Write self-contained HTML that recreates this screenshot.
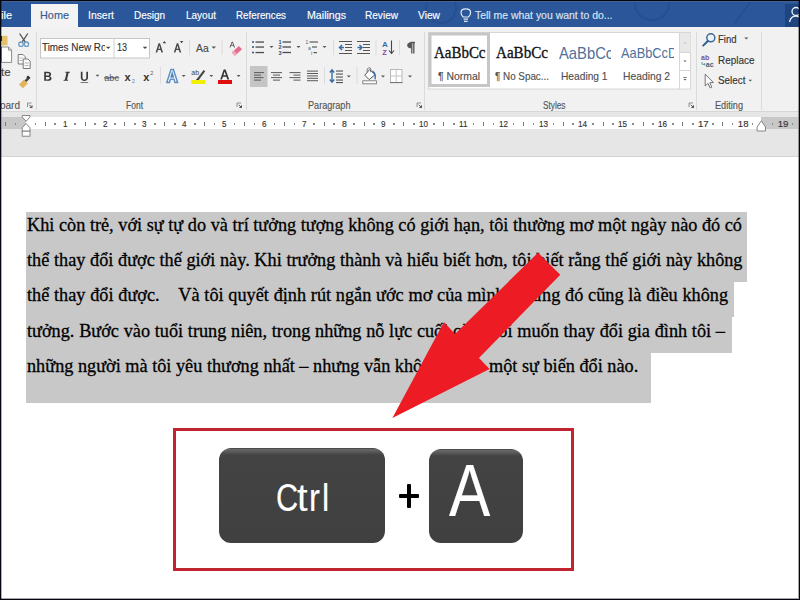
<!DOCTYPE html>
<html><head><meta charset="utf-8"><style>
*{margin:0;padding:0;box-sizing:border-box}
html,body{width:800px;height:600px;overflow:hidden;background:#fff}
body{position:relative;font-family:"Liberation Sans",sans-serif}
.a{position:absolute}
.t{position:absolute;white-space:pre;transform-origin:0 0;-webkit-text-stroke:0.15px currentColor}
.rt{position:absolute;background:#777}
.sep{position:absolute;width:1px;background:#dadada}
.sel{position:absolute;background:#c8c8c8}
</style></head>
<body>
<!-- tab bar -->
<div class="a" style="left:0;top:0;width:800px;height:27px;background:#2b579a"></div>
<div class="a" style="left:784.5px;top:4px;width:15.5px;height:22.5px;background:#1f4581"></div>
<div class="a" style="left:31px;top:4px;width:47px;height:24px;background:#f3f3f3"></div>
<!-- ribbon -->
<div class="a" style="left:0;top:27px;width:800px;height:85px;background:#f1f1f1"></div>
<div class="a" style="left:0;top:111px;width:800px;height:1px;background:#d6d6d6"></div>
<!-- group separators -->
<div class="sep" style="left:36px;top:32px;height:78px"></div>
<div class="sep" style="left:246px;top:32px;height:78px"></div>
<div class="sep" style="left:424px;top:32px;height:78px"></div>
<div class="sep" style="left:696px;top:32px;height:78px"></div>
<div class="sep" style="left:761px;top:32px;height:78px"></div>
<!-- ruler area -->
<div class="a" style="left:0;top:112px;width:800px;height:44px;background:#e6e6e6"></div>
<div class="a" style="left:2px;top:117px;width:796px;height:12px;background:#ffffff"></div>
<div class="a" style="left:2px;top:117px;width:24px;height:12px;background:#c8c8c8"></div>
<div class="a" style="left:761px;top:117px;width:37px;height:12px;background:#c8c8c8"></div>
<div class="rt" style="left:4.93px;top:122px;width:1px;height:4.3px"></div>
<div class="rt" style="left:14.59px;top:123px;width:1.6px;height:1.6px;background:#8a8a8a"></div>
<div class="rt" style="left:34.51px;top:123px;width:1.6px;height:1.6px;background:#8a8a8a"></div>
<div class="rt" style="left:44.77px;top:122px;width:1px;height:4.3px"></div>
<div class="rt" style="left:54.44px;top:123px;width:1.6px;height:1.6px;background:#8a8a8a"></div>
<div class="rt" style="left:74.36px;top:123px;width:1.6px;height:1.6px;background:#8a8a8a"></div>
<div class="rt" style="left:84.62px;top:122px;width:1px;height:4.3px"></div>
<div class="rt" style="left:94.29px;top:123px;width:1.6px;height:1.6px;background:#8a8a8a"></div>
<div class="rt" style="left:114.21px;top:123px;width:1.6px;height:1.6px;background:#8a8a8a"></div>
<div class="rt" style="left:124.47px;top:122px;width:1px;height:4.3px"></div>
<div class="rt" style="left:134.14px;top:123px;width:1.6px;height:1.6px;background:#8a8a8a"></div>
<div class="rt" style="left:154.06px;top:123px;width:1.6px;height:1.6px;background:#8a8a8a"></div>
<div class="rt" style="left:164.33px;top:122px;width:1px;height:4.3px"></div>
<div class="rt" style="left:173.99px;top:123px;width:1.6px;height:1.6px;background:#8a8a8a"></div>
<div class="rt" style="left:193.91px;top:123px;width:1.6px;height:1.6px;background:#8a8a8a"></div>
<div class="rt" style="left:204.18px;top:122px;width:1px;height:4.3px"></div>
<div class="rt" style="left:213.84px;top:123px;width:1.6px;height:1.6px;background:#8a8a8a"></div>
<div class="rt" style="left:233.76px;top:123px;width:1.6px;height:1.6px;background:#8a8a8a"></div>
<div class="rt" style="left:244.03px;top:122px;width:1px;height:4.3px"></div>
<div class="rt" style="left:253.69px;top:123px;width:1.6px;height:1.6px;background:#8a8a8a"></div>
<div class="rt" style="left:273.61px;top:123px;width:1.6px;height:1.6px;background:#8a8a8a"></div>
<div class="rt" style="left:283.88px;top:122px;width:1px;height:4.3px"></div>
<div class="rt" style="left:293.54px;top:123px;width:1.6px;height:1.6px;background:#8a8a8a"></div>
<div class="rt" style="left:313.46px;top:123px;width:1.6px;height:1.6px;background:#8a8a8a"></div>
<div class="rt" style="left:323.72px;top:122px;width:1px;height:4.3px"></div>
<div class="rt" style="left:333.39px;top:123px;width:1.6px;height:1.6px;background:#8a8a8a"></div>
<div class="rt" style="left:353.31px;top:123px;width:1.6px;height:1.6px;background:#8a8a8a"></div>
<div class="rt" style="left:363.57px;top:122px;width:1px;height:4.3px"></div>
<div class="rt" style="left:373.24px;top:123px;width:1.6px;height:1.6px;background:#8a8a8a"></div>
<div class="rt" style="left:393.16px;top:123px;width:1.6px;height:1.6px;background:#8a8a8a"></div>
<div class="rt" style="left:403.42px;top:122px;width:1px;height:4.3px"></div>
<div class="rt" style="left:413.09px;top:123px;width:1.6px;height:1.6px;background:#8a8a8a"></div>
<div class="rt" style="left:433.01px;top:123px;width:1.6px;height:1.6px;background:#8a8a8a"></div>
<div class="rt" style="left:443.27px;top:122px;width:1px;height:4.3px"></div>
<div class="rt" style="left:452.94px;top:123px;width:1.6px;height:1.6px;background:#8a8a8a"></div>
<div class="rt" style="left:472.86px;top:123px;width:1.6px;height:1.6px;background:#8a8a8a"></div>
<div class="rt" style="left:483.12px;top:122px;width:1px;height:4.3px"></div>
<div class="rt" style="left:492.79px;top:123px;width:1.6px;height:1.6px;background:#8a8a8a"></div>
<div class="rt" style="left:512.71px;top:123px;width:1.6px;height:1.6px;background:#8a8a8a"></div>
<div class="rt" style="left:522.98px;top:122px;width:1px;height:4.3px"></div>
<div class="rt" style="left:532.64px;top:123px;width:1.6px;height:1.6px;background:#8a8a8a"></div>
<div class="rt" style="left:552.56px;top:123px;width:1.6px;height:1.6px;background:#8a8a8a"></div>
<div class="rt" style="left:562.83px;top:122px;width:1px;height:4.3px"></div>
<div class="rt" style="left:572.49px;top:123px;width:1.6px;height:1.6px;background:#8a8a8a"></div>
<div class="rt" style="left:592.41px;top:123px;width:1.6px;height:1.6px;background:#8a8a8a"></div>
<div class="rt" style="left:602.68px;top:122px;width:1px;height:4.3px"></div>
<div class="rt" style="left:612.34px;top:123px;width:1.6px;height:1.6px;background:#8a8a8a"></div>
<div class="rt" style="left:632.26px;top:123px;width:1.6px;height:1.6px;background:#8a8a8a"></div>
<div class="rt" style="left:642.53px;top:122px;width:1px;height:4.3px"></div>
<div class="rt" style="left:652.19px;top:123px;width:1.6px;height:1.6px;background:#8a8a8a"></div>
<div class="rt" style="left:672.11px;top:123px;width:1.6px;height:1.6px;background:#8a8a8a"></div>
<div class="rt" style="left:682.38px;top:122px;width:1px;height:4.3px"></div>
<div class="rt" style="left:692.04px;top:123px;width:1.6px;height:1.6px;background:#8a8a8a"></div>
<div class="rt" style="left:711.96px;top:123px;width:1.6px;height:1.6px;background:#8a8a8a"></div>
<div class="rt" style="left:722.23px;top:122px;width:1px;height:4.3px"></div>
<div class="rt" style="left:731.89px;top:123px;width:1.6px;height:1.6px;background:#8a8a8a"></div>
<div class="rt" style="left:751.81px;top:123px;width:1.6px;height:1.6px;background:#8a8a8a"></div>
<div class="rt" style="left:762.08px;top:122px;width:1px;height:4.3px"></div>
<div class="rt" style="left:771.74px;top:123px;width:1.6px;height:1.6px;background:#8a8a8a"></div>
<div class="rt" style="left:791.66px;top:123px;width:1.6px;height:1.6px;background:#8a8a8a"></div>
<svg class="a" style="left:0;top:0" width="800" height="160" viewBox="0 0 800 160">
<path d="M22.2,115.5 H30 V117 L26.1,121.3 L22.2,117 Z" fill="#fff" stroke="#7a7a7a" stroke-width="0.9"/>
<path d="M26.1,123.6 L30,127.8 V131.2 H22.2 V127.8 Z" fill="#fff" stroke="#7a7a7a" stroke-width="0.9"/>
<rect x="22.2" y="131.2" width="7.8" height="5" fill="#fff" stroke="#7a7a7a" stroke-width="0.9"/>
<path d="M761.3,120.8 L765.5,127 V131 H757.1 V127 Z" fill="#fff" stroke="#7a7a7a" stroke-width="0.9"/>
</svg>
<div class="a" style="left:0;top:155.5px;width:800px;height:1px;background:#d2d2d2"></div>
<!-- selection -->
<div class="sel" style="left:26px;top:212px;width:720.5px;height:70px"></div>
<div class="sel" style="left:26px;top:281px;width:707.5px;height:36px"></div>
<div class="sel" style="left:26px;top:316.5px;width:705.5px;height:36px"></div>
<div class="sel" style="left:26px;top:352px;width:625px;height:51px"></div>
<svg class="a" style="left:0;top:0" width="800" height="600" viewBox="0 0 800 600"><g fill="none" stroke="#e6ecf5" stroke-width="1.2"><path d="M463.2,17 C461.4,15.4 461,13.9 461,12.6 C461,10.3 463,8.8 465.8,8.8 C468.6,8.8 470.6,10.3 470.6,12.6 C470.6,13.9 470.2,15.4 468.4,17 Z"/><path d="M463.6,19.2 H468 M464,21.4 H467.6"/></g><g fill="none" stroke="#eef2f8" stroke-width="1.3"><circle cx="796" cy="11.5" r="4"/><path d="M789.5,22 C790.5,17.5 793,16 796,16 C799,16 801,17.5 802,22"/></g><g fill="none" stroke="#20498a" stroke-width="1.8" opacity="0.55"><circle cx="441" cy="8" r="15"/><circle cx="652" cy="3" r="17"/><path d="M735,23 L752,0"/></g><rect x="0.5" y="36" width="2" height="5" fill="#3b3b3b"/><rect x="2" y="35.8" width="5.5" height="9.5" fill="#e5c06b"/><path d="M1.5,47 H8.5 L11.6,50.2 V62.4 H1.5 Z" fill="#fdfdfd" stroke="#8a8a8a" stroke-width="1"/><path d="M8.5,47 V50.2 H11.6" fill="none" stroke="#8a8a8a" stroke-width="0.9"/><g fill="none" stroke-width="1.3"><path d="M19.6,33.5 L25.3,42.2 M27.8,33.5 L22.1,42.2" stroke="#555"/><circle cx="21" cy="44.2" r="2.2" stroke="#6f9cc0"/><circle cx="26.4" cy="44.2" r="2.2" stroke="#6f9cc0"/></g><g fill="#fafafa" stroke="#7a7a7a" stroke-width="1"><path d="M18.2,54.5 H23 L25.2,56.7 V64 H18.2 Z"/><path d="M23.2,59 H28 L30.2,61.2 V68.5 H23.2 Z"/></g><g stroke="#9a9a9a" stroke-width="0.7" fill="none"><path d="M19.6,58 H22.6 M19.6,60.5 H22.6 M24.6,63 H28.8 M24.6,65.5 H28.8"/></g><path d="M19,84.5 L24,79.6 L27.8,83.4 L22.9,88.3 Z" fill="#e0b55d"/><path d="M24.6,80.2 L28.8,76.2 L30.5,77.9 L26.3,82 Z" fill="#444"/><rect x="26.8" y="76" width="2.5" height="2.5" fill="#333" transform="rotate(45 28 77.2)"/><g fill="none" stroke="#777" stroke-width="0.8"><path d="M27.5,107 V103 H31.5"/></g><path d="M29.3,104.8 L32.0,107.5 M32.0,105.3 V107.5 H29.8" stroke="#555" stroke-width="1" fill="none"/><g fill="none" stroke="#777" stroke-width="0.8"><path d="M237,107 V103 H241"/></g><path d="M238.8,104.8 L241.5,107.5 M241.5,105.3 V107.5 H239.3" stroke="#555" stroke-width="1" fill="none"/><g fill="none" stroke="#777" stroke-width="0.8"><path d="M417,107 V103 H421"/></g><path d="M418.8,104.8 L421.5,107.5 M421.5,105.3 V107.5 H419.3" stroke="#555" stroke-width="1" fill="none"/><g fill="none" stroke="#777" stroke-width="0.8"><path d="M689,107 V103 H693"/></g><path d="M690.8,104.8 L693.5,107.5 M693.5,105.3 V107.5 H691.3" stroke="#555" stroke-width="1" fill="none"/><rect x="40.5" y="38.5" width="109" height="19.5" fill="#fff" stroke="#c6c6c6" stroke-width="1"/><path d="M114,38.5 V58" stroke="#d0d0d0" stroke-width="1"/><polygon points="105.90,46.8 110.50,46.8 108.2,49.10" fill="#444"/><polygon points="142.70,46.8 147.30,46.8 145,49.10" fill="#444"/><g fill="#474747"><path d="M155.6,52.6 L158.6,43.3 H160 L163,52.6 H161.4 L160.6,50 H158 L157.2,52.6 Z M158.4,48.7 H160.2 L159.3,45.6 Z"/><path d="M173.8,52.6 L176.8,43.3 H178.2 L181.2,52.6 H179.6 L178.8,50 H176.2 L175.4,52.6 Z M176.6,48.7 H178.4 L177.5,45.6 Z"/></g><polygon points="162.6,43.3 164.4,41 166.2,43.3" fill="#474747"/><polygon points="179.8,41 183.4,41 181.6,43.3" fill="#474747"/><rect x="189" y="40" width="1" height="15" fill="#dcdcdc"/><rect x="221.5" y="40" width="1" height="15" fill="#dcdcdc"/><polygon points="211.50,46.5 216.10,46.5 213.8,48.80" fill="#555"/><path d="M229.5,47.5 L231.8,41.8 H232.8 L235,47.5 H234 L233.5,46 H231 L230.5,47.5 Z M231.3,45.2 H233.2 L232.3,42.8 Z" fill="#555"/><g transform="rotate(-42 236.8 50.8)"><rect x="232" y="48.6" width="9.6" height="4.6" fill="#e56d89"/><rect x="232" y="48.6" width="2.8" height="4.6" fill="#f2aabb"/></g><g fill="#3a3a3a"><path d="M44.2,71.8 H47.8 C50,71.8 51.1,72.8 51.1,74.2 C51.1,75.3 50.4,76 49.6,76.2 C50.7,76.4 51.5,77.2 51.5,78.4 C51.5,80 50.3,80.8 48.2,80.8 H44.2 Z M45.9,73.2 V75.6 H47.6 C48.8,75.6 49.3,75.1 49.3,74.4 C49.3,73.6 48.8,73.2 47.6,73.2 Z M45.9,76.9 V79.4 H47.9 C49.1,79.4 49.7,78.9 49.7,78.1 C49.7,77.3 49.1,76.9 47.9,76.9 Z"/><path d="M65.5,71.8 H70 L69.8,72.8 H68.6 L67,79.8 H68.2 L68,80.8 H63.5 L63.7,79.8 H64.9 L66.5,72.8 H65.3 Z"/><path d="M80.8,71.8 H82.5 V77.6 C82.5,79 83.2,79.6 84.4,79.6 C85.6,79.6 86.3,79 86.3,77.6 V71.8 H88 V77.6 C88,80 86.6,81 84.4,81 C82.2,81 80.8,80 80.8,77.6 Z"/></g><rect x="80.6" y="82" width="7.6" height="1" fill="#7a7a7a"/><polygon points="95.60,74.8 99.40,74.8 97.5,76.70" fill="#555"/><text x="104.3" y="80.7" font-family="Liberation Sans" font-size="9.5" fill="#555" textLength="14.7" lengthAdjust="spacingAndGlyphs">abc</text><rect x="104" y="77.4" width="15.2" height="0.9" fill="#444"/><text x="124.6" y="80.8" font-family="Liberation Sans" font-weight="bold" font-size="11" fill="#333">x</text><text x="131.8" y="82.6" font-family="Liberation Sans" font-size="5.5" fill="#4f81bd">2</text><text x="143.3" y="80.8" font-family="Liberation Sans" font-weight="bold" font-size="11" fill="#333">x</text><text x="150.2" y="75.2" font-family="Liberation Sans" font-size="5.5" fill="#555">2</text><rect x="160" y="67" width="1" height="17" fill="#dcdcdc"/><path d="M166.8,82.4 L171,69.6 H173.4 L177.6,82.4 H175 L174,79.2 H170.4 L169.4,82.4 Z M171.1,77 H173.3 L172.2,73.2 Z" fill="#fff" stroke="#5f8fc4" stroke-width="1.5"/><path d="M171.4,76.6 H173 L172.2,74.2 Z" fill="#3f6fa6"/><polygon points="181.80,75 185.60,75 183.7,76.90" fill="#555"/><text x="191.3" y="75.4" font-family="Liberation Sans" font-size="7" fill="#444">ab</text><path d="M196.5,79.5 L203.6,70 L205.2,71.3 L198.4,80.6 Z" fill="#444"/><path d="M196,80.2 L197.2,78.6 L198.6,79.8 Z" fill="#222"/><rect x="191.3" y="80" width="14.2" height="4" fill="#f2ef00"/><polygon points="209.40,75 213.20,75 211.3,76.90" fill="#555"/><path d="M220.2,79.5 L223.7,69.4 H225.6 L229.2,79.5 H227.3 L226.4,76.8 H222.9 L222,79.5 Z M223.4,75.3 H225.9 L224.65,71.6 Z" fill="#333"/><rect x="218" y="80" width="14" height="4" fill="#e00d0d"/><polygon points="236.70,75 240.50,75 238.6,76.90" fill="#555"/><circle cx="253" cy="42" r="1.1" fill="#3b5f8a"/><rect x="255.5" y="41.4" width="8.5" height="1.3" fill="#4a4a4a"/><circle cx="253" cy="47" r="1.1" fill="#3b5f8a"/><rect x="255.5" y="46.4" width="8.5" height="1.3" fill="#4a4a4a"/><circle cx="253" cy="52.5" r="1.1" fill="#3b5f8a"/><rect x="255.5" y="51.9" width="8.5" height="1.3" fill="#4a4a4a"/><polygon points="269.50,46 273.50,46 271.5,48.00" fill="#555"/><text x="278.5" y="44" font-family="Liberation Sans" font-size="5.5" font-weight="bold" fill="#2f4f78">1</text><rect x="282.5" y="41.35" width="8.5" height="1.3" fill="#4a4a4a"/><text x="278.5" y="49" font-family="Liberation Sans" font-size="5.5" font-weight="bold" fill="#2f4f78">2</text><rect x="282.5" y="46.35" width="8.5" height="1.3" fill="#4a4a4a"/><text x="278.5" y="54.5" font-family="Liberation Sans" font-size="5.5" font-weight="bold" fill="#2f4f78">3</text><rect x="282.5" y="51.85" width="8.5" height="1.3" fill="#4a4a4a"/><polygon points="296.50,46 300.50,46 298.5,48.00" fill="#555"/><text x="305.5" y="44" font-family="Liberation Sans" font-size="5" fill="#3b5f8a">1</text><rect x="309.5" y="41.4" width="8.5" height="1.2" fill="#5a5a5a"/><text x="308" y="49.5" font-family="Liberation Sans" font-size="5" fill="#3b5f8a">a</text><rect x="312" y="46.4" width="5" height="1.2" fill="#5a5a5a"/><text x="311" y="55" font-family="Liberation Sans" font-size="5" fill="#3b5f8a">i</text><rect x="313.5" y="52" width="3.5" height="1.2" fill="#5a5a5a"/><polygon points="322.50,46 326.50,46 324.5,48.00" fill="#555"/><rect x="333" y="40" width="1" height="15" fill="#dcdcdc"/><rect x="375.5" y="40" width="1" height="15" fill="#dcdcdc"/><rect x="399" y="40" width="1" height="15" fill="#dcdcdc"/><rect x="339" y="41" width="13" height="1" fill="#555"/><rect x="339" y="53" width="13" height="1" fill="#555"/><rect x="345" y="44" width="7" height="1" fill="#555"/><rect x="345" y="47" width="7" height="1" fill="#555"/><rect x="345" y="50" width="7" height="1" fill="#555"/><path d="M344,47.5 H339.5 M342,45 L339.5,47.5 L342,50" stroke="#3a6ea5" stroke-width="1.5" fill="none"/><rect x="357" y="41" width="13" height="1" fill="#555"/><rect x="357" y="53" width="13" height="1" fill="#555"/><rect x="363" y="44" width="7" height="1" fill="#555"/><rect x="363" y="47" width="7" height="1" fill="#555"/><rect x="363" y="50" width="7" height="1" fill="#555"/><path d="M357.5,47.5 H362 M359.5,45 L362,47.5 L359.5,50" stroke="#3a6ea5" stroke-width="1.5" fill="none"/><text x="382" y="47.2" font-family="Liberation Sans" font-weight="bold" font-size="8" fill="#3a6ea5">A</text><text x="382.3" y="54.6" font-family="Liberation Sans" font-weight="bold" font-size="7.5" fill="#8b4c9a">Z</text><path d="M391.5,40.5 V53 M389,50.5 L391.5,53.5 L394,50.5" stroke="#444" stroke-width="1.1" fill="none"/><path d="M410.5,42.5 H415 M411.8,42.5 V53.5 M413.8,42.5 V53.5" stroke="#555" stroke-width="1.3" fill="none"/><path d="M411.5,42.2 C408,42.2 407.2,44 407.2,45.3 C407.2,46.6 408,48.4 411.5,48.4 Z" fill="#555"/><rect x="250" y="66" width="17.5" height="21" fill="#c5c5c5"/><rect x="254" y="72.1" width="10" height="1" fill="#595959"/><rect x="254" y="74.6" width="7" height="1" fill="#595959"/><rect x="254" y="77.1" width="9.5" height="1" fill="#595959"/><rect x="254" y="79.6" width="7" height="1" fill="#595959"/><rect x="271" y="72.1" width="11" height="1" fill="#595959"/><rect x="273" y="74.6" width="7" height="1" fill="#595959"/><rect x="271" y="77.1" width="11" height="1" fill="#595959"/><rect x="273" y="79.6" width="7" height="1" fill="#595959"/><rect x="289.5" y="72.1" width="11" height="1" fill="#595959"/><rect x="293.5" y="74.6" width="7" height="1" fill="#595959"/><rect x="289.5" y="77.1" width="11" height="1" fill="#595959"/><rect x="293.5" y="79.6" width="7" height="1" fill="#595959"/><rect x="307" y="70.6" width="11" height="1" fill="#595959"/><rect x="307" y="73" width="11" height="1" fill="#595959"/><rect x="307" y="75.4" width="11" height="1" fill="#595959"/><rect x="307" y="77.8" width="11" height="1" fill="#595959"/><rect x="307" y="80.2" width="11" height="1" fill="#595959"/><rect x="324" y="67" width="1" height="17" fill="#dcdcdc"/><rect x="356.5" y="67" width="1" height="17" fill="#dcdcdc"/><path d="M332,70 V82 M329.8,72.5 L332,69.8 L334.2,72.5 M329.8,79.5 L332,82.2 L334.2,79.5" stroke="#3a6ea5" stroke-width="1.4" fill="none"/><rect x="336" y="70.5" width="7" height="1.1" fill="#555"/><rect x="336" y="73.5" width="7" height="1.1" fill="#555"/><rect x="336" y="76.5" width="7" height="1.1" fill="#555"/><rect x="336" y="79.5" width="7" height="1.1" fill="#555"/><rect x="336" y="82" width="7" height="1.1" fill="#555"/><polygon points="346.80,75.5 350.80,75.5 348.8,77.50" fill="#555"/><path d="M369.6,69.6 L375.2,74.6 L369.2,79.6 L364.8,75.2 Z" fill="#fff" stroke="#555" stroke-width="1"/><path d="M367.2,72.2 C366.6,69.2 368,67.6 369.4,67.8 C370.8,68 371.4,69.5 370.6,72.2" fill="none" stroke="#666" stroke-width="0.9"/><path d="M372.6,70.4 C375.6,72 376.6,75.8 375.6,79.6 L374.4,79.2 C375,76.5 374.4,74 372.2,72.4 Z" fill="#3a6ea5"/><rect x="362.8" y="80.8" width="13.6" height="3" fill="#fff" stroke="#777" stroke-width="0.9"/><polygon points="381.00,75.5 385.00,75.5 383,77.50" fill="#555"/><rect x="390.5" y="69.5" width="11.5" height="13" fill="#fff" stroke="#b8b8b8" stroke-width="1"/><path d="M396.2,69.5 V82.5 M390.5,76 H402" stroke="#c4c4c4" stroke-width="1"/><path d="M390,82.6 H402.5" stroke="#707070" stroke-width="1"/><polygon points="408.00,75.5 412.00,75.5 410,77.50" fill="#555"/><rect x="428.5" y="32.5" width="262" height="56.5" fill="#fff" stroke="#d6d6d6" stroke-width="1"/><rect x="430" y="34" width="58.5" height="51.5" fill="none" stroke="#c6c6c6" stroke-width="3"/><rect x="679.5" y="33" width="11" height="19.5" fill="#e8e8e8"/><path d="M679.5,33 V89 M679.5,52.5 H690.5 M679.5,70.5 H690.5" stroke="#d6d6d6" stroke-width="1" fill="none"/><polygon points="683.5,43.5 686.5,43.5 685,42" fill="#bdbdbd"/><polygon points="683.40,60.5 686.60,60.5 685,62.10" fill="#555"/><rect x="683.3" y="77" width="3.4" height="0.8" fill="#555"/><polygon points="683.40,79 686.60,79 685,80.60" fill="#555"/><circle cx="710.8" cy="37.8" r="4" fill="#eaf3fa" stroke="#3a6893" stroke-width="1.5"/><path d="M707.8,41 L703.2,45.6" stroke="#2f5d8a" stroke-width="1.9" stroke-linecap="round"/><polygon points="744.30,37.5 748.30,37.5 746.3,39.50" fill="#555"/><text x="701" y="60" font-family="Liberation Sans" font-weight="bold" font-size="7" fill="#7b5590">ab</text><text x="705.8" y="67" font-family="Liberation Sans" font-weight="bold" font-size="7" fill="#3f5f78">ac</text><path d="M702,62 V64.3 H705 M704,63.3 L705.2,64.3 L704,65.3" stroke="#2f8aa0" stroke-width="0.8" fill="none"/><path d="M705.2,74.2 V86 L708,83.4 L710.2,88 L711.8,87.2 L709.8,82.7 L713.4,82.5 Z" fill="#fafafa" stroke="#666" stroke-width="0.9"/><polygon points="748.50,79.8 752.10,79.8 750.3,81.60" fill="#555"/></svg>
<div id="L0" class="t" style="left:27px;top:214.79px;font-size:19px;line-height:19px;color:#000;-webkit-text-stroke:0.3px #000;font-family:'Liberation Serif', serif;word-spacing:0.037px;transform:scaleX(0.96)">Khi còn trẻ, với sự tự do và trí tưởng tượng không có giới hạn, tôi thường mơ một ngày nào đó có</div>
<div id="L1" class="t" style="left:27px;top:250.09px;font-size:19px;line-height:19px;color:#000;-webkit-text-stroke:0.3px #000;font-family:'Liberation Serif', serif;word-spacing:0.120px;transform:scaleX(0.96)">thể thay đổi được thế giới này. Khi trưởng thành và hiểu biết hơn, tôi biết rằng thế giới này không</div>
<div id="L2" class="t" style="left:27px;top:285.39px;font-size:19px;line-height:19px;color:#000;-webkit-text-stroke:0.3px #000;font-family:'Liberation Serif', serif;word-spacing:0.211px;transform:scaleX(0.96)">thể thay đổi được.    Và tôi quyết định rút ngắn ước mơ của mình, nhưng đó cũng là điều không</div>
<div id="L3" class="t" style="left:27px;top:320.69px;font-size:19px;line-height:19px;color:#000;-webkit-text-stroke:0.3px #000;font-family:'Liberation Serif', serif;word-spacing:0.184px;transform:scaleX(0.96)">tưởng. Bước vào tuổi trung niên, trong những nỗ lực cuối cùng tôi muốn thay đổi gia đình tôi –</div>
<div id="L4" class="t" style="left:27px;top:355.79px;font-size:19px;line-height:19px;color:#000;-webkit-text-stroke:0.3px #000;font-family:'Liberation Serif', serif;word-spacing:0.000px;transform:scaleX(0.96)">những người mà tôi yêu thương nhất – nhưng vẫn không có</div>
<div id="L5" class="t" style="left:489px;top:355.79px;font-size:19px;line-height:19px;color:#000;-webkit-text-stroke:0.3px #000;font-family:'Liberation Serif', serif;word-spacing:0.000px;transform:scaleX(0.96)">một sự biến đổi nào.</div>
<div id="t0" class="t" style="left:1px;top:9.69px;font-size:11px;line-height:11px;color:#ffffff;font-family:'Liberation Sans', sans-serif;font-weight:normal;">ile</div>
<div id="t1" class="t" style="left:40px;top:9.69px;font-size:11px;line-height:11px;color:#385a8c;font-family:'Liberation Sans', sans-serif;font-weight:normal;transform:scaleX(0.9883);">Home</div>
<div id="t2" class="t" style="left:88px;top:9.69px;font-size:11px;line-height:11px;color:#ffffff;font-family:'Liberation Sans', sans-serif;font-weight:normal;transform:scaleX(0.9449);">Insert</div>
<div id="t3" class="t" style="left:134px;top:9.69px;font-size:11px;line-height:11px;color:#ffffff;font-family:'Liberation Sans', sans-serif;font-weight:normal;transform:scaleX(0.9051);">Design</div>
<div id="t4" class="t" style="left:186px;top:9.69px;font-size:11px;line-height:11px;color:#ffffff;font-family:'Liberation Sans', sans-serif;font-weight:normal;transform:scaleX(0.9082);">Layout</div>
<div id="t5" class="t" style="left:236px;top:9.69px;font-size:11px;line-height:11px;color:#ffffff;font-family:'Liberation Sans', sans-serif;font-weight:normal;transform:scaleX(0.8886);">References</div>
<div id="t6" class="t" style="left:306.5px;top:9.69px;font-size:11px;line-height:11px;color:#ffffff;font-family:'Liberation Sans', sans-serif;font-weight:normal;transform:scaleX(0.9663);">Mailings</div>
<div id="t7" class="t" style="left:365px;top:9.69px;font-size:11px;line-height:11px;color:#ffffff;font-family:'Liberation Sans', sans-serif;font-weight:normal;transform:scaleX(0.9147);">Review</div>
<div id="t8" class="t" style="left:418px;top:9.69px;font-size:11px;line-height:11px;color:#ffffff;font-family:'Liberation Sans', sans-serif;font-weight:normal;transform:scaleX(0.9300);">View</div>
<div id="t9" class="t" style="left:475px;top:10.19px;font-size:11px;line-height:11px;color:#dde5f0;font-family:'Liberation Sans', sans-serif;font-weight:normal;transform:scaleX(0.9488);">Tell me what you want to do...</div>
<div id="t10" class="t" style="left:0px;top:99.61px;font-size:10.5px;line-height:10.5px;color:#555;font-family:'Liberation Sans', sans-serif;font-weight:normal;transform:scaleX(0.9517);">oard</div>
<div id="t11" class="t" style="left:126px;top:99.61px;font-size:10.5px;line-height:10.5px;color:#555;font-family:'Liberation Sans', sans-serif;font-weight:normal;transform:scaleX(0.8089);">Font</div>
<div id="t12" class="t" style="left:307.5px;top:99.61px;font-size:10.5px;line-height:10.5px;color:#555;font-family:'Liberation Sans', sans-serif;font-weight:normal;transform:scaleX(0.8665);">Paragraph</div>
<div id="t13" class="t" style="left:542.5px;top:99.61px;font-size:10.5px;line-height:10.5px;color:#555;font-family:'Liberation Sans', sans-serif;font-weight:normal;transform:scaleX(0.7869);">Styles</div>
<div id="t14" class="t" style="left:715px;top:99.61px;font-size:10.5px;line-height:10.5px;color:#555;font-family:'Liberation Sans', sans-serif;font-weight:normal;transform:scaleX(0.8720);">Editing</div>
<div id="t15" class="t" style="left:0.5px;top:66.77px;font-size:11.5px;line-height:11.5px;color:#444;font-family:'Liberation Sans', sans-serif;font-weight:normal;transform:scaleX(0.9902);">te</div>
<div class="a" style="left:0;top:0;width:104.5px;height:600px;overflow:hidden"><div id="t16" class="t" style="left:42px;top:42.27px;font-size:11.5px;line-height:11.5px;color:#333;font-family:'Liberation Sans', sans-serif;font-weight:normal;transform:scaleX(0.8600);">Times New Ro</div></div>
<div id="t17" class="t" style="left:117px;top:42.27px;font-size:11.5px;line-height:11.5px;color:#333;font-family:'Liberation Sans', sans-serif;font-weight:normal;transform:scaleX(0.7814);">13</div>
<div id="t18" class="t" style="left:195.8px;top:42.89px;font-size:11px;line-height:11px;color:#4a4a4a;font-family:'Liberation Sans', sans-serif;font-weight:normal;transform:scaleX(0.9429);">Aa</div>
<div id="t19" class="t" style="left:434px;top:43.76px;font-size:17px;line-height:17px;color:#111;font-family:'Liberation Serif', serif;font-weight:normal;transform:scaleX(0.8796);-webkit-text-stroke:0.35px #111">AaBbCc</div>
<div id="t20" class="t" style="left:438px;top:70.69px;font-size:11px;line-height:11px;color:#505050;font-family:'Liberation Sans', sans-serif;font-weight:normal;transform:scaleX(0.9455);">¶ Normal</div>
<div id="t21" class="t" style="left:496px;top:43.76px;font-size:17px;line-height:17px;color:#111;font-family:'Liberation Serif', serif;font-weight:normal;transform:scaleX(0.8882);-webkit-text-stroke:0.35px #111">AaBbCc</div>
<div id="t22" class="t" style="left:495px;top:70.69px;font-size:11px;line-height:11px;color:#505050;font-family:'Liberation Sans', sans-serif;font-weight:normal;transform:scaleX(0.8951);">¶ No Spac...</div>
<div class="a" style="left:0;top:0;width:610.5px;height:600px;overflow:hidden"><div id="t23" class="t" style="left:558.5px;top:44.61px;font-size:17px;line-height:17px;color:#4f6f9c;font-family:'Liberation Sans', sans-serif;font-weight:normal;transform:scaleX(0.8700);-webkit-text-stroke:0">AaBbCc</div></div>
<div id="t24" class="t" style="left:560.5px;top:70.69px;font-size:11px;line-height:11px;color:#505050;font-family:'Liberation Sans', sans-serif;font-weight:normal;transform:scaleX(0.9271);">Heading 1</div>
<div class="a" style="left:0;top:0;width:673.5px;height:600px;overflow:hidden"><div id="t25" class="t" style="left:621px;top:45.81px;font-size:14.4px;line-height:14.4px;color:#4f6f9c;font-family:'Liberation Sans', sans-serif;font-weight:normal;transform:scaleX(0.8900);-webkit-text-stroke:0">AaBbCcD</div></div>
<div id="t26" class="t" style="left:623px;top:70.69px;font-size:11px;line-height:11px;color:#505050;font-family:'Liberation Sans', sans-serif;font-weight:normal;transform:scaleX(0.9371);">Heading 2</div>
<div id="t27" class="t" style="left:717.5px;top:33.87px;font-size:11.5px;line-height:11.5px;color:#333;font-family:'Liberation Sans', sans-serif;font-weight:normal;transform:scaleX(0.8268);">Find</div>
<div id="t28" class="t" style="left:717.5px;top:55.27px;font-size:11.5px;line-height:11.5px;color:#333;font-family:'Liberation Sans', sans-serif;font-weight:normal;transform:scaleX(0.8649);">Replace</div>
<div id="t29" class="t" style="left:717.5px;top:75.27px;font-size:11.5px;line-height:11.5px;color:#333;font-family:'Liberation Sans', sans-serif;font-weight:normal;transform:scaleX(0.8602);">Select</div>
<div id="t35" class="t" style="left:62.650000000000006px;top:118.87px;font-size:9.6px;line-height:9.6px;color:#333;font-family:'Liberation Sans', sans-serif;font-weight:normal;transform:scaleX(0.8421);">1</div>
<div id="t36" class="t" style="left:102.50000000000001px;top:118.87px;font-size:9.6px;line-height:9.6px;color:#333;font-family:'Liberation Sans', sans-serif;font-weight:normal;transform:scaleX(0.8421);">2</div>
<div id="t37" class="t" style="left:142.35px;top:118.87px;font-size:9.6px;line-height:9.6px;color:#333;font-family:'Liberation Sans', sans-serif;font-weight:normal;transform:scaleX(0.8421);">3</div>
<div id="t38" class="t" style="left:182.2px;top:118.87px;font-size:9.6px;line-height:9.6px;color:#333;font-family:'Liberation Sans', sans-serif;font-weight:normal;transform:scaleX(0.8421);">4</div>
<div id="t39" class="t" style="left:222.05px;top:118.87px;font-size:9.6px;line-height:9.6px;color:#333;font-family:'Liberation Sans', sans-serif;font-weight:normal;transform:scaleX(0.8421);">5</div>
<div id="t40" class="t" style="left:261.9px;top:118.87px;font-size:9.6px;line-height:9.6px;color:#333;font-family:'Liberation Sans', sans-serif;font-weight:normal;transform:scaleX(0.8421);">6</div>
<div id="t41" class="t" style="left:301.75px;top:118.87px;font-size:9.6px;line-height:9.6px;color:#333;font-family:'Liberation Sans', sans-serif;font-weight:normal;transform:scaleX(0.8433);">7</div>
<div id="t42" class="t" style="left:341.59999999999997px;top:118.87px;font-size:9.6px;line-height:9.6px;color:#333;font-family:'Liberation Sans', sans-serif;font-weight:normal;transform:scaleX(0.9028);">8</div>
<div id="t43" class="t" style="left:381.45px;top:118.87px;font-size:9.6px;line-height:9.6px;color:#333;font-family:'Liberation Sans', sans-serif;font-weight:normal;transform:scaleX(0.8433);">9</div>
<div id="t44" class="t" style="left:419.05px;top:118.87px;font-size:9.6px;line-height:9.6px;color:#333;font-family:'Liberation Sans', sans-serif;font-weight:normal;transform:scaleX(0.8433);">10</div>
<div id="t45" class="t" style="left:458.9px;top:118.87px;font-size:9.6px;line-height:9.6px;color:#333;font-family:'Liberation Sans', sans-serif;font-weight:normal;transform:scaleX(0.8433);">11</div>
<div id="t46" class="t" style="left:498.75px;top:118.87px;font-size:9.6px;line-height:9.6px;color:#333;font-family:'Liberation Sans', sans-serif;font-weight:normal;transform:scaleX(0.8433);">12</div>
<div id="t47" class="t" style="left:538.6000000000001px;top:118.87px;font-size:9.6px;line-height:9.6px;color:#333;font-family:'Liberation Sans', sans-serif;font-weight:normal;transform:scaleX(0.8433);">13</div>
<div id="t48" class="t" style="left:578.4500000000002px;top:118.87px;font-size:9.6px;line-height:9.6px;color:#333;font-family:'Liberation Sans', sans-serif;font-weight:normal;transform:scaleX(0.8433);">14</div>
<div id="t49" class="t" style="left:618.3000000000001px;top:118.87px;font-size:9.6px;line-height:9.6px;color:#333;font-family:'Liberation Sans', sans-serif;font-weight:normal;transform:scaleX(0.8433);">15</div>
<div id="t50" class="t" style="left:658.1500000000001px;top:118.87px;font-size:9.6px;line-height:9.6px;color:#333;font-family:'Liberation Sans', sans-serif;font-weight:normal;transform:scaleX(0.8433);">16</div>
<div id="t51" class="t" style="left:698.0000000000001px;top:118.87px;font-size:9.6px;line-height:9.6px;color:#333;font-family:'Liberation Sans', sans-serif;font-weight:normal;">17</div>
<div id="t52" class="t" style="left:737.8500000000001px;top:118.87px;font-size:9.6px;line-height:9.6px;color:#333;font-family:'Liberation Sans', sans-serif;font-weight:normal;">18</div>
<div id="t53" class="t" style="left:777.7000000000002px;top:118.87px;font-size:9.6px;line-height:9.6px;color:#333;font-family:'Liberation Sans', sans-serif;font-weight:normal;">19</div>
<!-- arrow -->
<svg class="a" style="left:0;top:0" width="800" height="600" viewBox="0 0 800 600">
<polygon points="392.4,418 444,322 455,334 538,252.7 560.3,274.7 479,358 489.6,369" fill="#ed1c24"/>
</svg>
<!-- ctrl+a box -->
<div class="a" style="left:173px;top:427.5px;width:401px;height:143.5px;border:3px solid #c2242f"></div>
<div class="a" style="left:219px;top:448px;width:166px;height:95px;border-radius:12px;background:linear-gradient(#3e3e3e 0px,#676767 1.5px,#575757 4px,#434343 7px,#404040 100%)"></div>
<div class="a" style="left:429px;top:449px;width:94px;height:94px;border-radius:12px;background:linear-gradient(#3e3e3e 0px,#676767 1.5px,#575757 4px,#434343 7px,#404040 100%)"></div>
<div class="a" style="left:399px;top:494px;width:20.3px;height:4.3px;background:#000;border-radius:1px"></div>
<div class="a" style="left:406.7px;top:484.3px;width:4.3px;height:24px;background:#000;border-radius:1px"></div>
<div id="t30" class="t" style="left:275.5px;top:478.81px;font-size:38.5px;line-height:38.5px;color:#ffffff;font-family:'Liberation Sans', sans-serif;font-weight:normal;transform:scaleX(0.8000);">C</div>
<div id="t31" class="t" style="left:297px;top:478.81px;font-size:38.5px;line-height:38.5px;color:#ffffff;font-family:'Liberation Sans', sans-serif;font-weight:normal;transform:scaleX(0.9892);">t</div>
<div id="t32" class="t" style="left:308.5px;top:478.81px;font-size:38.5px;line-height:38.5px;color:#ffffff;font-family:'Liberation Sans', sans-serif;font-weight:normal;transform:scaleX(0.8500);">r</div>
<div id="t33" class="t" style="left:322px;top:478.81px;font-size:38.5px;line-height:38.5px;color:#ffffff;font-family:'Liberation Sans', sans-serif;font-weight:normal;transform:scaleX(0.8421);">l</div>
<div id="t34" class="t" style="left:448.5px;top:453.78px;font-size:73.5px;line-height:73.5px;color:#ffffff;font-family:'Liberation Sans', sans-serif;font-weight:normal;transform:scaleX(0.8421);">A</div>
<!-- outer frame -->
<div class="a" style="left:1px;top:1px;width:798px;height:1px;background:#46628f"></div>
<div class="a" style="left:0;top:0;width:800px;height:600px;border:1px solid #05050f;box-shadow:inset -1px -1px 0 rgba(0,0,0,0.35),inset 1px 0 0 rgba(0,0,0,0.3)"></div>
</body></html>
